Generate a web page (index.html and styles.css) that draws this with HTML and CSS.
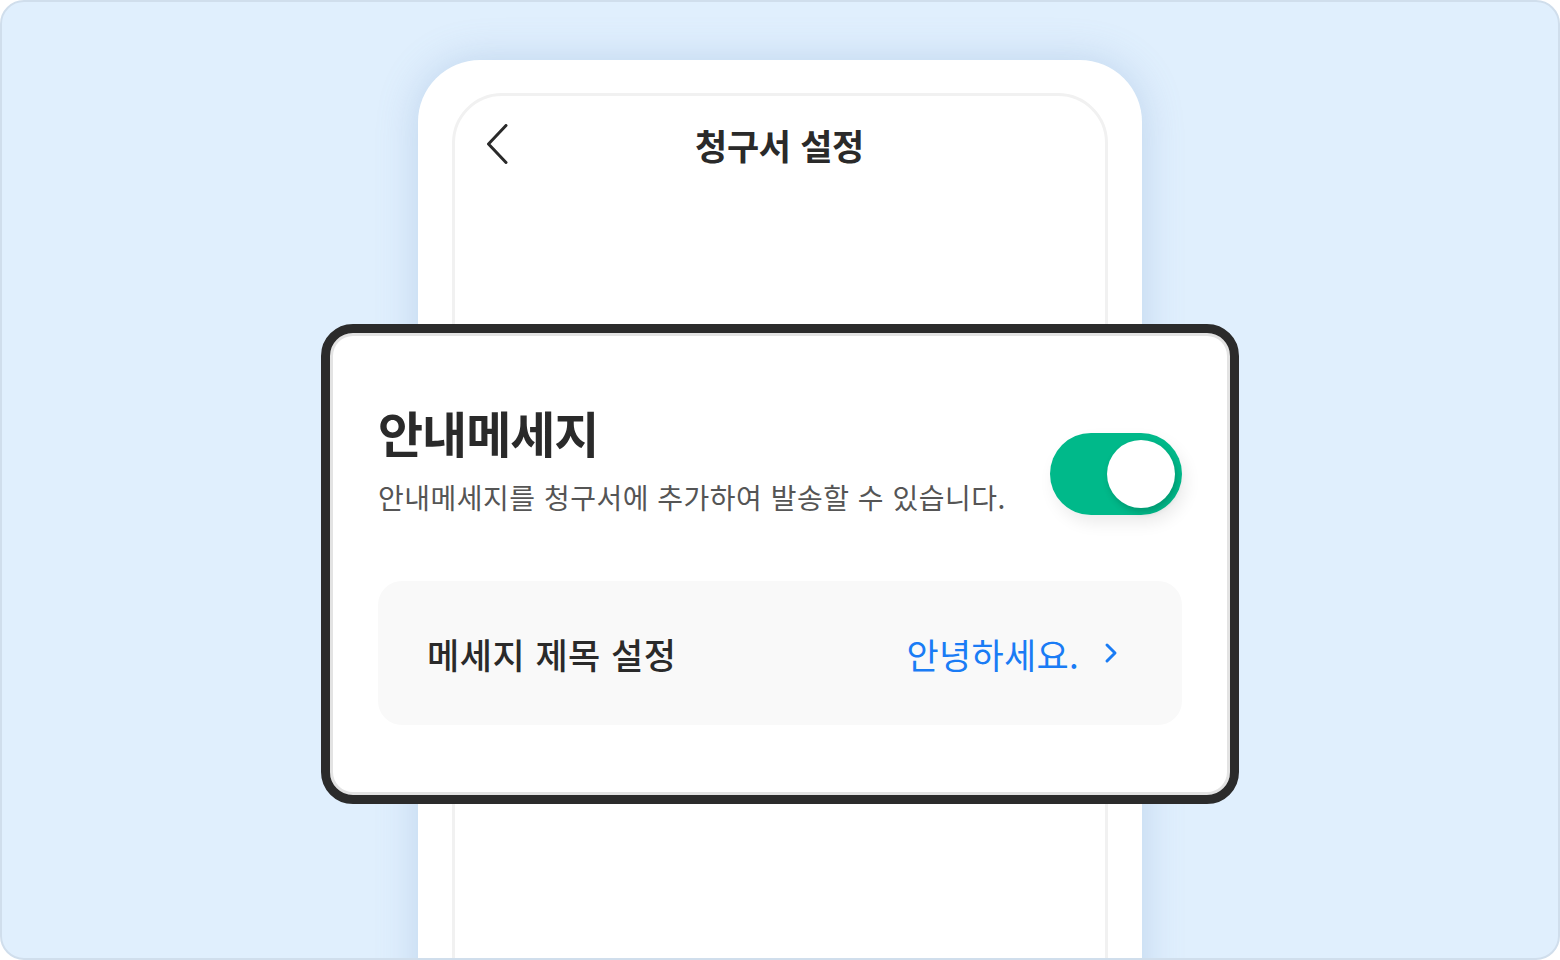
FILE: index.html
```html
<!DOCTYPE html>
<html lang="ko">
<head>
  <meta charset="UTF-8">
  <title>청구서 설정</title>
  <link rel="stylesheet" href="styles.css">
</head>
<body>
  <div class="frame">
    <div class="phone">
      <div class="screen">
        <div class="topbar">
          <span class="back">
            <svg width="22" height="40" viewBox="0 0 22 40">
              <polyline points="20,1.5 2.5,20 20,38.5" fill="none" stroke="#2a2a2a" stroke-width="3" stroke-linecap="round" stroke-linejoin="round"/>
            </svg>
          </span>
          <h1 class="page-title">청구서 설정</h1>
          <span></span>
        </div>
      </div>
    </div>

    <div class="card">
      <div class="card-head">
        <div class="card-text">
          <h2>안내메세지</h2>
          <p>안내메세지를 청구서에 추가하여 발송할 수 있습니다.</p>
        </div>
        <div class="toggle on">
          <span class="knob"></span>
        </div>
      </div>

      <div class="row">
        <span class="row-label">메세지 제목 설정</span>
        <span class="row-value">
          안녕하세요.
          <svg width="14" height="22" viewBox="0 0 14 22">
            <polyline points="3,3 11,11 3,19" fill="none" stroke="#1a7cf5" stroke-width="3" stroke-linecap="round" stroke-linejoin="round"/>
          </svg>
        </span>
      </div>
    </div>
  </div>
</body>
</html>
```

FILE: styles.css
```css
body {
  margin: 0;
  font-family: "Noto Sans CJK KR", "Noto Sans", sans-serif;
  color: #2a2a2a;
}
.frame {
  position: relative;
  width: 1560px;
  height: 960px;
  box-sizing: border-box;
  border: 2px solid #d0deec;
  border-radius: 24px;
  background: #e0effd;
  overflow: hidden;
}
.phone {
  width: 724px;
  height: 1000px;
  box-sizing: border-box;
  margin: 58px auto 0;
  padding: 33px 34px 0;
  background: #fff;
  border-radius: 62px;
  box-shadow: 0 0 40px rgba(110, 150, 200, 0.3);
}
.screen {
  height: 100%;
  border: 3px solid #f1f1f1;
  border-radius: 50px;
}
.topbar {
  display: grid;
  grid-template-columns: 1fr auto 1fr;
  align-items: center;
  height: 96px;
  padding: 0 32px 0 31px;
}
.back {
  display: flex;
}
.page-title {
  margin: 0;
  font-size: 35px;
  font-weight: 700;
  letter-spacing: -0.3px;
}
.card {
  position: absolute;
  left: 319px;
  top: 322px;
  width: 918px;
  height: 480px;
  box-sizing: border-box;
  border: 9px solid #2b2b2b;
  border-radius: 32px;
  background: #fff;
  box-shadow: inset 0 0 0 3px #e3e3e3;
  padding: 70px 48px 0;
}
.card-head {
  display: flex;
  justify-content: space-between;
  align-items: center;
}
.card-text h2 {
  margin: 0;
  font-size: 49px;
  font-weight: 700;
  line-height: 1.2;
  letter-spacing: -1px;
}
.card-text p {
  margin: 17px 0 0;
  font-size: 28px;
  line-height: 1.3;
  color: #555;
  letter-spacing: 0.5px;
}
.toggle {
  position: relative;
  width: 132px;
  height: 82px;
  margin-top: 30px;
  border-radius: 41px;
  background: #00b98a;
  box-shadow: 4px 8px 16px rgba(0, 0, 0, 0.08);
}
.knob {
  position: absolute;
  right: 7px;
  top: 7px;
  width: 68px;
  height: 68px;
  border-radius: 50%;
  background: #fff;
  box-shadow: 2px 4px 6px rgba(0, 60, 40, 0.25);
}
.row {
  display: flex;
  justify-content: space-between;
  align-items: center;
  height: 144px;
  margin-top: 66px;
  padding: 0 64px 0 49px;
  border-radius: 24px;
  background: #f9f9f9;
}
.row-label {
  font-size: 35px;
  font-weight: 500;
  letter-spacing: 0.5px;
}
.row-value {
  display: flex;
  align-items: center;
  gap: 25px;
  font-size: 35px;
  color: #1a7cf5;
  letter-spacing: 0.3px;
}
```
